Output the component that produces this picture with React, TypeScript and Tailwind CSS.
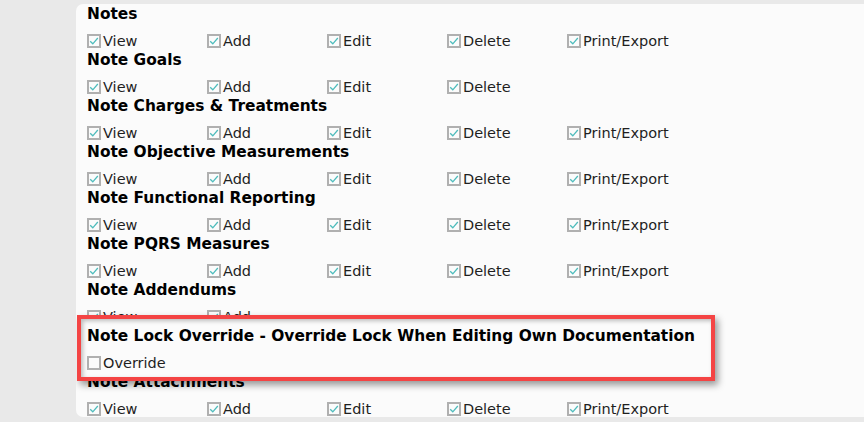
import React from "react";

type Section = {
  title: string;
  perms: string[];
};

const ALL = ["View", "Add", "Edit", "Delete", "Print/Export"];

const sections: Section[] = [
  { title: "Notes", perms: ALL },
  { title: "Note Goals", perms: ["View", "Add", "Edit", "Delete"] },
  { title: "Note Charges & Treatments", perms: ALL },
  { title: "Note Objective Measurements", perms: ALL },
  { title: "Note Functional Reporting", perms: ALL },
  { title: "Note PQRS Measures", perms: ALL },
  { title: "Note Addendums", perms: ["View", "Add"] },
  { title: "Note Lock Override - Override Lock When Editing Own Documentation", perms: [] },
  { title: "Note Attachments", perms: ALL },
];

const Box = ({ checked }: { checked: boolean }) => (
  <span className="w-[14px] h-[14px] border-2 border-[#b0b0b0] bg-[#fbfbfb] flex items-center justify-center shrink-0">
    {checked && (
      <svg width="10" height="10" viewBox="0 0 10 10" fill="none">
        <path d="M1.2 5.2 L3.8 7.8 L8.8 2" stroke="#4fbcbc" strokeWidth="1.3" />
      </svg>
    )}
  </span>
);

const Perm = ({ label, checked = true }: { label: string; checked?: boolean }) => (
  <label className="w-[120px] flex items-center gap-[2px] text-[14.5px] text-[#1f1f1f] leading-[16px]">
    <Box checked={checked} />
    <span>{label}</span>
  </label>
);

const App = () => {
  return (
    <div
      className="w-[864px] h-[422px] bg-[#e9e9e9] pt-[4px] pl-[76px] overflow-hidden"
      style={{ fontFamily: '"DejaVu Sans", sans-serif' }}
    >
      <div className="relative h-[413px] bg-[#fbfbfb] rounded-l-[7px] pl-[11px] overflow-hidden">
        <div className="flex flex-col -mt-[2px]">
          {sections.map((s) => (
            <div key={s.title} className="h-[46px]">
              <h3 className="h-[23px] flex items-center text-[15.4px] font-bold text-black leading-[20px]">
                {s.title}
              </h3>
              <div className="flex items-center h-[23px] pt-[8px]">
                {s.perms.map((p) => (
                  <Perm key={p} label={p} />
                ))}
              </div>
            </div>
          ))}
        </div>

        {/* highlight box */}
        <div className="absolute left-[1px] top-[311px] w-[638px] h-[66px] border-[4px] border-[#f44444] bg-[#fbfbfb] shadow-[3px_4px_7px_rgba(0,0,0,0.4),inset_2px_2px_4px_rgba(0,0,0,0.25)] pl-[6px]">
          <h3 className="h-[24px] mt-[5px] flex items-center text-[15.4px] font-bold text-black leading-[20px]">
            Note Lock Override - Override Lock When Editing Own Documentation
          </h3>
          <div className="flex items-center h-[24px] pt-[5px]">
            <Perm label="Override" checked={false} />
          </div>
        </div>
      </div>
    </div>
  );
};

export default App;
